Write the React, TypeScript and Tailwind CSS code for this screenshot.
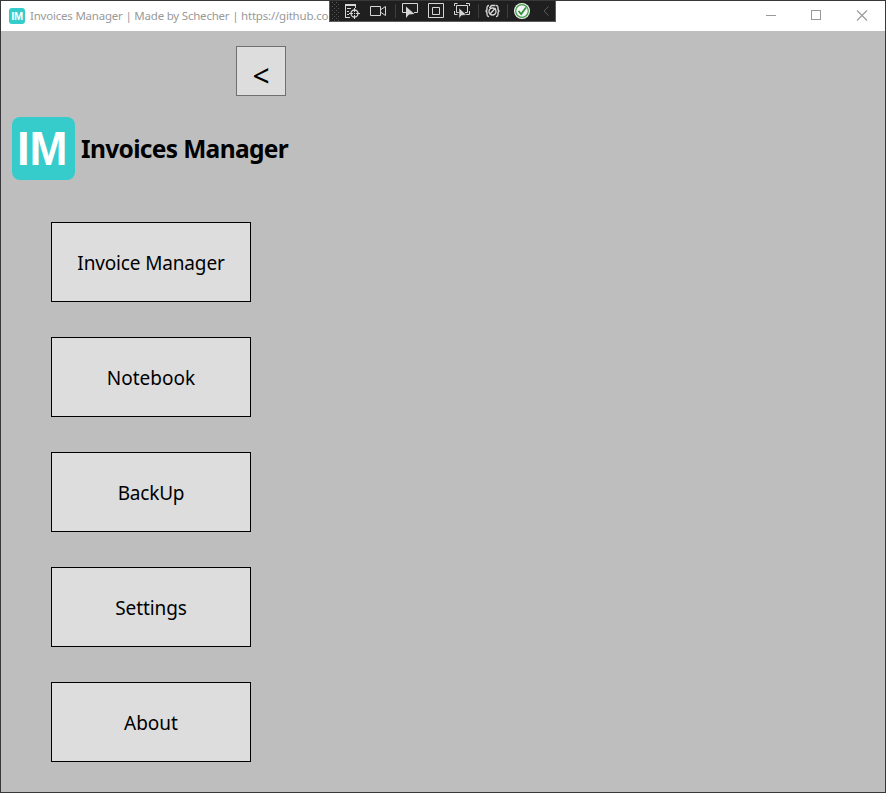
import React from "react";

const pages = [
  { label: "Invoice Manager", tracking: "tracking-[-0.15px]" },
  { label: "Notebook", tracking: "tracking-[0px]" },
  { label: "BackUp", tracking: "tracking-[-0.2px]" },
  { label: "Settings", tracking: "tracking-[-0.1px]" },
  { label: "About", tracking: "tracking-[0px]" },
];

function DebugToolbar() {
  return (
    <div className="absolute -top-px left-[328px] h-[22px] w-[227px] border border-[#5c5c5c] bg-[#1f1f1f]">
      <svg className="-ml-px -mt-px block" width="227" height="22" viewBox="0 0 227 22" fill="none">
        <g fill="#555">
          {[2, 6, 10, 14, 18].map((y) => (
            <React.Fragment key={y}>
              <rect x="3" y={y} width="1" height="1" />
              <rect x="7" y={y} width="1" height="1" />
              <rect x="5" y={y + 2} width="1" height="1" />
              <rect x="9" y={y + 2} width="1" height="1" />
            </React.Fragment>
          ))}
        </g>
        <g stroke="#d6d6d6">
          <path d="M16 4.500h11M16.500 4v13M16 17.500h5M26.500 4v4M16 5.500h11M18 8.500h4M18 11.500h2M18 14.500h2" />
          <circle cx="25.500" cy="13.500" r="3.500" strokeWidth="1.300" />
          <path d="M25.500 8v4M25.500 15v4M20 13.500h4M27 13.500h4M25 13.500h1" />
          <path d="M41.500 6.500h10v9h-10zM52 9.500l4.500-3v9l-4.500-3" />
          <path d="M78 12.500H73.500v-9h15v9H85" />
          <path d="M99.500 3.500h15v14h-15zM103.500 7.500h7v7h-7z" />
          <path d="M125.500 6V3.500h3M137 3.500h3.500V6M125.500 11v3.500h3M140.500 11v3.500H137M130 12.500h-2.500v-7h11v7H136" />
        </g>
        <path d="M66.500 4v14M149.500 4v14M178.500 4v14" stroke="#3d3d3d" />
        <path d="M77 6.500v11.500l3-3.500 5.500-.5z" fill="#d6d6d6" />
        <path d="M130 8v10.500l2.500-3 5-.5z" fill="#d6d6d6" stroke="#1f1f1f" strokeWidth=".5" />
        <g stroke="#d6d6d6" strokeWidth="1.400">
          <path d="M160 5.500c-2 0-2 1-2 3s-.5 2.500-1.500 2.500c1 0 1.500.5 1.500 2.500s0 3 2 3M167 5.500c2 0 2 1 2 3s.5 2.500 1.500 2.500c-1 0-1.500.5-1.500 2.500s0 3-2 3" />
          <circle cx="163.500" cy="11.500" r="3.500" />
          <path d="M161 14l5.500-6M160.500 8l2-2.500h4" />
        </g>
        <circle cx="193" cy="11" r="8" fill="#f4f4f4" />
        <circle cx="193" cy="11" r="6.300" stroke="#3e9b46" strokeWidth="1.200" />
        <path d="M189.500 11l2.700 3 4.800-6.500" stroke="#2f9138" strokeWidth="1.800" />
        <path d="M219.500 6.500l-4.500 4.500 4.500 4.500" stroke="#5b5b5b" />
      </svg>
    </div>
  );
}

function TitleBar() {
  return (
    <header className="flex h-[30px] shrink-0 items-center bg-white pl-2">
      <span className="flex size-4 items-center justify-center rounded-[3px] bg-[#35cccb] text-[11px] font-bold leading-4 tracking-[-0.3px] text-white [font-family:'Liberation_Sans',sans-serif]">
        IM
      </span>
      <span className="ml-[5px] whitespace-nowrap text-[11.5px] leading-4 tracking-[-0.21px] text-[#999]">
        Invoices Manager | Made by Schecher | https://github.co
      </span>
      <svg className="ml-auto mr-[16px]" width="104" height="12" viewBox="0 0 104 12" fill="none" stroke="#999" shapeRendering="crispEdges">
        <path d="M1 5.500h10M46.500 .5h9v9h-9z" />
        <path d="M92 .5l10 10M102 .5L92 10.500" shapeRendering="auto" strokeWidth="1.100" />
      </svg>
    </header>
  );
}

export default function App() {
  return (
    <div className="relative flex h-[793px] w-[886px] flex-col overflow-hidden border border-[#3a373a] bg-[#bebebe] text-black [font-family:'Noto_Sans','Open_Sans',sans-serif]">
      <TitleBar />
      <main className="flex w-[300px] flex-col">
        <button className="ml-[235px] mt-[15px] flex size-[50px] items-center justify-center border border-[#707070] bg-[#ddd] pt-[9px] text-[30px] leading-none">
          &lt;
        </button>
        <div className="ml-[11px] mt-[21px] flex h-[63px] items-center">
          <div className="flex size-[63px] items-center justify-center rounded-[8px] bg-[#35cccb] pr-[3px] text-[49px] font-bold leading-[63px] text-white [font-family:'Liberation_Sans',sans-serif]">
            <span className="inline-block scale-x-[0.93]">IM</span>
          </div>
          <h1 className="ml-[6px] whitespace-nowrap text-[24.5px] font-bold leading-[34px] tracking-[-0.65px]">Invoices Manager</h1>
        </div>
        <nav className="ml-[50px] mt-[42px] flex flex-col gap-[35px]">
          {pages.map(({ label, tracking }) => (
            <button key={label} className="flex h-20 w-[200px] items-center justify-center border border-black bg-[#ddd] pt-0.5 text-[19px]">
              <span className={`whitespace-nowrap leading-[26px] ${tracking}`}>{label}</span>
            </button>
          ))}
        </nav>
      </main>
      <DebugToolbar />
    </div>
  );
}
